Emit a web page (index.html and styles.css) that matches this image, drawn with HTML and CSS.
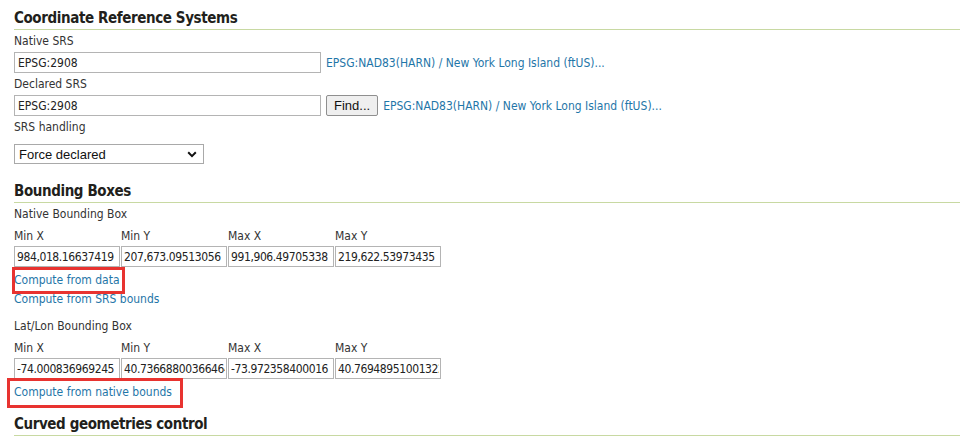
FILE: index.html
```html
<!DOCTYPE html>
<html>
<head>
<meta charset="utf-8">
<link rel="stylesheet" href="styles.css">
</head>
<body>
<div class="page">
  <h3 class="section-title">Coordinate Reference Systems</h3>
  <div class="field first">
    <div class="label">Native SRS</div>
    <div class="row">
      <input class="text srs" type="text" value="EPSG:2908">
      <a class="link" href="#">EPSG:NAD83(HARN) / New York Long Island (ftUS)...</a>
    </div>
  </div>
  <div class="field">
    <div class="label">Declared SRS</div>
    <div class="row">
      <input class="text srs" type="text" value="EPSG:2908">
      <button class="btn" type="button">Find...</button>
      <a class="link" href="#">EPSG:NAD83(HARN) / New York Long Island (ftUS)...</a>
    </div>
  </div>
  <div class="field">
    <div class="label">SRS handling</div>
    <div class="select">
      <span>Force declared</span>
      <svg width="10" height="7" viewBox="0 0 10 7"><path d="M1.2 1.3 L5 5.1 L8.8 1.3" fill="none" stroke="#111" stroke-width="2"/></svg>
    </div>
  </div>

  <h3 class="section-title bbox-title">Bounding Boxes</h3>
  <div class="label first">Native Bounding Box</div>
  <div class="bbox">
    <div class="bbox-head">Min X</div>
    <div class="bbox-head">Min Y</div>
    <div class="bbox-head">Max X</div>
    <div class="bbox-head">Max Y</div>
    <input class="text num" type="text" value="984,018.16637419">
    <input class="text num" type="text" value="207,673.09513056">
    <input class="text num" type="text" value="991,906.49705338">
    <input class="text num" type="text" value="219,622.53973435">
  </div>
  <div class="links">
    <div class="link-line"><a class="link marked mark-data" href="#">Compute from data</a></div>
    <div class="link-line"><a class="link" href="#">Compute from SRS bounds</a></div>
  </div>

  <div class="label latlon">Lat/Lon Bounding Box</div>
  <div class="bbox">
    <div class="bbox-head">Min X</div>
    <div class="bbox-head">Min Y</div>
    <div class="bbox-head">Max X</div>
    <div class="bbox-head">Max Y</div>
    <input class="text num" type="text" value="-74.000836969245">
    <input class="text num" type="text" value="40.73668800366464">
    <input class="text num" type="text" value="-73.972358400016">
    <input class="text num" type="text" value="40.76948951001322">
  </div>
  <div class="links">
    <div class="link-line"><a class="link marked mark-native" href="#">Compute from native bounds</a></div>
  </div>

  <h3 class="section-title curved-title">Curved geometries control</h3>
</div>
</body>
</html>
```

FILE: styles.css
```css
html, body {
  margin: 0;
  padding: 0;
  background: #fff;
}

body {
  font-family: "DejaVu Sans Condensed", "DejaVu Sans", sans-serif;
  font-stretch: condensed;
  font-size: 12px;
  color: #333;
}

.page {
  padding: 9px 0 0 14px;
}

.section-title {
  margin: 0;
  font-size: 15px;
  line-height: 18px;
  font-weight: bold;
  letter-spacing: -0.4px;
  color: #221f1c;
  padding-bottom: 2px;
  border-bottom: 1px solid #c8d9a2;
}

.bbox-title {
  margin-top: 18px;
}

.curved-title {
  margin-top: 13px;
}

.label {
  line-height: 16px;
  color: #333;
}

.field {
  margin-top: 3px;
}

.field .label {
  margin-bottom: 3px;
}

.label.first {
  margin-top: 3px;
}

.row {
  display: flex;
  align-items: center;
  gap: 5px;
}

.text {
  box-sizing: border-box;
  height: 21px;
  margin: 0;
  padding: 0 2px 0 3px;
  border: 1px solid #b4b4b4;
  font-family: "DejaVu Sans Condensed", "DejaVu Sans", sans-serif;
  font-stretch: condensed;
  font-size: 12px;
  color: #222;
  background: #fff;
  outline: none;
}

.srs {
  width: 307px;
}

.link {
  color: #1f76a8;
  text-decoration: none;
  font-size: 12px;
}

.btn {
  box-sizing: border-box;
  height: 21px;
  margin: 0;
  padding: 0 7px;
  border: 1px solid #8f8f8f;
  border-radius: 2px;
  background: #efefef;
  font-family: "Liberation Sans", Arial, sans-serif;
  font-size: 13px;
  color: #111;
}

.select {
  box-sizing: border-box;
  width: 190px;
  height: 20px;
  margin-top: 9px;
  border: 1px solid #a9a9a9;
  display: flex;
  align-items: center;
  justify-content: space-between;
  padding: 0 6px 0 4px;
  font-family: "Liberation Sans", Arial, sans-serif;
  font-size: 13px;
  color: #111;
}

.bbox {
  display: grid;
  grid-template-columns: repeat(4, 106px);
  column-gap: 1px;
  row-gap: 2px;
  margin-top: 6px;
}

.bbox-head {
  line-height: 16px;
  color: #333;
}

.num {
  width: 106px;
  padding: 0 1px 0 2px;
  letter-spacing: -0.4px;
}

.links {
  margin-top: 4px;
}

.link-line {
  line-height: 19px;
}

.marked {
  position: relative;
}

.marked::after {
  content: "";
  position: absolute;
  border: 3px solid #e83330;
  box-sizing: border-box;
}

.mark-data::after {
  left: -2px;
  top: -6px;
  width: 113px;
  height: 27px;
}

.mark-native::after {
  left: -7px;
  top: -7px;
  width: 176px;
  height: 30px;
}

.latlon {
  margin-top: 9px;
}
```
